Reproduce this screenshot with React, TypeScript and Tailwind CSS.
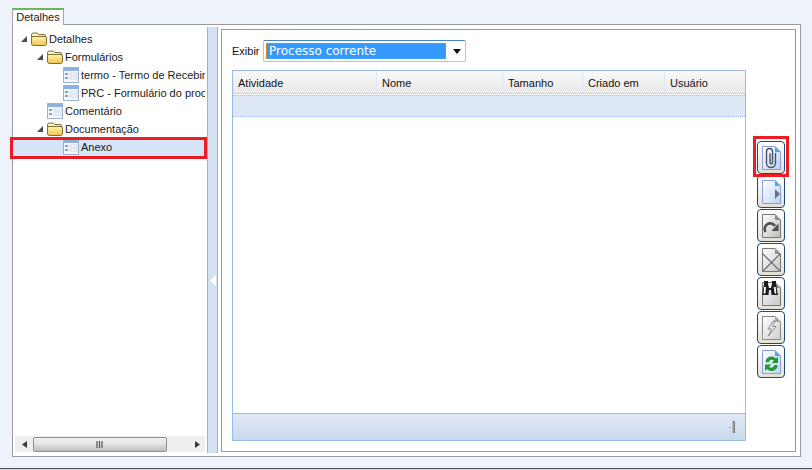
import React from "react";

const Folder = () => (
  <svg width="16" height="14" viewBox="0 0 16 14" className="shrink-0">
    <defs>
      <linearGradient id="fg" x1="0" y1="0" x2="0" y2="1">
        <stop offset="0" stopColor="#fff3b0" />
        <stop offset="1" stopColor="#f2c24a" />
      </linearGradient>
    </defs>
    <path d="M.5 5 V3 Q.5 1 2.5 1 H6 L7.5 2.5 H13 Q14.5 2.5 14.5 4 V6" fill="#fdf2bf" stroke="#7d6f35" />
    <path d="M.5 11.5 V6 Q.5 4.5 2 4.5 H14 Q15.5 4.5 15.5 6 V11.5 Q15.5 13.5 13.5 13.5 H2.5 Q.5 13.5 .5 11.5Z" fill="url(#fg)" stroke="#7d6f35" />
  </svg>
);

const FormIcon = () => (
  <svg width="16" height="16" viewBox="0 0 16 16" className="shrink-0">
    <rect x=".5" y=".5" width="15" height="15" fill="#f3f6fa" stroke="#9db2cc" />
    <rect x="1" y="1" width="14" height="3" fill="#8fb0dc" />
    <rect x="2" y="6" width="3" height="2" fill="#7ea4dc" />
    <rect x="2" y="10" width="3" height="2" fill="#7ea4dc" />
    <rect x="7" y="6" width="7" height="2" fill="#fff" stroke="#bcc6d2" strokeWidth=".6" />
    <rect x="7" y="10" width="7" height="2" fill="#fff" stroke="#bcc6d2" strokeWidth=".6" />
  </svg>
);

const Expander = () => (
  <svg width="6" height="6" viewBox="0 0 6 6" className="shrink-0">
    <path d="M6 0 V6 H0Z" fill="#4a4a4a" />
  </svg>
);

type RowProps = { level: number; label: string; kind: "folder" | "form"; open?: boolean; selected?: boolean };

const TreeRow = ({ level, label, kind, open, selected }: RowProps) => {
  const pads = ["pl-[8px]", "pl-[24px]", "pl-[40px]"];
  return (
    <div className={`flex h-[18px] items-center ${pads[level]} ${selected ? "bg-[#d5e4f7]" : ""}`}>
      <div className="flex w-[10px] shrink-0 justify-start">{open ? <Expander /> : null}</div>
      <div className="flex w-[18px] shrink-0 justify-start">
        {kind === "folder" ? <Folder /> : <FormIcon />}
      </div>
      <span className="whitespace-nowrap text-[11px] leading-[16px] text-[#1a1a1a]">{label}</span>
    </div>
  );
};

const HeaderCell = ({ label, w, last }: { label: string; w: string; last?: boolean }) => (
  <div className={`flex h-full items-center pl-[5px] pt-[2px] text-[11px] text-[#111] ${w} ${last ? "" : "border-r border-[#dde7f5]"}`}>
    {label}
  </div>
);

const Page = ({ fill, stroke, fold, children }: { fill: string; stroke: string; fold: string; children?: React.ReactNode }) => (
  <svg width="19" height="25" viewBox="0 0 19 25">
    <defs>
      <linearGradient id={`p${fill.slice(1)}`} x1="0" y1="0" x2="1" y2="1">
        <stop offset="0" stopColor="#ffffff" />
        <stop offset="1" stopColor={fill} />
      </linearGradient>
    </defs>
    <path d="M.5 1.5 H13 L18.5 7 V24.5 H.5Z" fill={`url(#p${fill.slice(1)})`} stroke={stroke} />
    <path d="M13 1.5 V7 H18.5Z" fill={fold} />
    {children}
  </svg>
);

const Btn = ({ children }: { children: React.ReactNode }) => (
  <div className="flex h-[33px] w-[28px] items-center justify-center rounded-[4px] border border-[#1f4a75] bg-gradient-to-b from-[#ffffff] to-[#e3e1d6]">
    {children}
  </div>
);

const Blue = "#bcd4f6";

export default function App() {
  return (
    <div className="relative flex h-[470px] w-[812px] flex-col overflow-hidden bg-[#edf2fb] font-['Liberation_Sans',sans-serif]">
      <div className="flex-1 pl-[12px] pt-[8px]">
        <div className="relative z-10 -mb-px flex h-[17px] w-[52px] items-center justify-center border-x border-t-2 border-x-[#a3a7a8] border-t-[#6fb35f] border-b-white bg-white text-[11px] text-[#222]">
          Detalhes
        </div>
        <div className="flex h-[433px] w-[789px] border border-[#979b9c] bg-white">
          {/* tree */}
          <div className="flex h-full w-[194px] shrink-0 flex-col">
            <div className="mr-[2px] flex-1 overflow-hidden pt-[5px]">
              <TreeRow level={0} label="Detalhes" kind="folder" open />
              <TreeRow level={1} label="Formulários" kind="folder" open />
              <TreeRow level={2} label="termo - Termo de Recebimento" kind="form" />
              <TreeRow level={2} label="PRC - Formulário do processo" kind="form" />
              <TreeRow level={1} label="Comentário" kind="form" />
              <TreeRow level={1} label="Documentação" kind="folder" open />
              <TreeRow level={2} label="Anexo" kind="form" selected />
            </div>
            <div className="mx-[2px] mb-[4px] flex h-[16px] items-center bg-[#efefef]">
              <div className="flex w-[18px] justify-center">
                <svg width="5" height="7" viewBox="0 0 5 7"><path d="M5 0 V7 L0 3.5Z" fill="#3a3a3a" /></svg>
              </div>
              <div className="flex h-[15px] w-[134px] items-center justify-center rounded-[2px] border border-[#8f8f8f] bg-gradient-to-b from-[#f2f2f2] via-[#e2e2e2] to-[#bcbcbc]">
                <svg width="8" height="7" viewBox="0 0 8 7"><path d="M1 0 V7 M3.5 0 V7 M6 0 V7" stroke="#555" strokeWidth="1.2" /></svg>
              </div>
              <div className="flex flex-1 justify-end pr-[5px]">
                <svg width="5" height="7" viewBox="0 0 5 7"><path d="M0 0 V7 L5 3.5Z" fill="#3a3a3a" /></svg>
              </div>
            </div>
          </div>

          {/* splitter */}
          <div className="mt-[2px] flex h-[426px] w-[11px] shrink-0 items-center justify-center border-x border-[#8fb4e3] bg-[#d3e1f1] pt-[80px]">
            <svg width="6" height="11" viewBox="0 0 6 11"><path d="M6 0 V11 L0 5.5Z" fill="#fff" /></svg>
          </div>

          {/* right panel */}
          <div className="ml-[3px] mt-[4px] flex h-[423px] w-[575px] shrink-0 border border-[#979b9c] p-[10px]">
            <div className="flex h-full w-[514px] shrink-0 flex-col">
              <div className="flex h-[22px] items-center">
                <span className="w-[31px] text-[11px] text-[#111]">Exibir</span>
                <div className="flex h-[22px] w-[203px] items-center rounded-[2px] border border-[#a9c6e3] border-t-[#4a86b8] bg-white pl-[2px]">
                  <div className="flex h-[16px] w-[180px] items-center border border-dotted border-[#e08a20] bg-[#3399ff] pl-[2px] font-['DejaVu_Sans',sans-serif] text-[12px] text-white">
                    Processo corrente
                  </div>
                  <div className="flex flex-1 justify-center pl-[2px]">
                    <svg width="8" height="5" viewBox="0 0 8 5"><path d="M0 0 H8 L4 5Z" fill="#111" /></svg>
                  </div>
                </div>
              </div>

              <div className="mt-[8px] flex flex-1 flex-col border border-[#99bbe8]">
                <div className="flex h-[23px] shrink-0 border-b border-[#d0d0d0] bg-gradient-to-b from-[#f9f9f9] to-[#e9e9e9]">
                  <HeaderCell label="Atividade" w="w-[144px]" />
                  <HeaderCell label="Nome" w="w-[126px]" />
                  <HeaderCell label="Tamanho" w="w-[80px]" />
                  <HeaderCell label="Criado em" w="w-[82px]" />
                  <HeaderCell label="Usuário" w="flex-1" last />
                </div>
                <div className="mt-px h-[22px] shrink-0 border-y border-dotted border-[#a3bae9] bg-[#dfe8f6]" />
                <div className="flex-1 bg-white" />
                <div className="flex h-[27px] shrink-0 items-center justify-end border-t border-[#99bbe8] bg-gradient-to-b from-[#dfe8f6] to-[#c9daed] pr-[10px]">
                  <div className="mr-[1px] h-px w-px bg-[#666]" />
                  <div className="ml-[1px] h-[12px] w-[3px] bg-gradient-to-r from-[#c8c8c8] to-[#6f6f6f]" />
                </div>
              </div>
            </div>

            <div className="ml-[11px] flex flex-col gap-px pt-[101px]">
              <Btn>
                <Page fill={Blue} stroke="#8a9ede" fold="#5c9ee8">
                  <path d="M13.5 8 V18 A4.5 4.5 0 0 1 4.5 18 V6.5 A3 3 0 0 1 10.5 6.5 V17.5 A1.2 1.2 0 0 1 8 17.5 V8.5" fill="none" stroke="#4a5260" strokeWidth="1.4" />
                </Page>
              </Btn>
              <Btn>
                <Page fill={Blue} stroke="#8a9ede" fold="#5c9ee8">
                  <path d="M18 15 L13 10 V20Z" fill="#667480" />
                </Page>
              </Btn>
              <Btn>
                <Page fill="#bdbdbd" stroke="#777" fold="#8f8f8f">
                  <path d="M3.5 19 A5.5 5.5 0 0 1 13 13" fill="none" stroke="#4f4f4f" strokeWidth="2.6" />
                  <path d="M16.5 10.5 V18 H9.5Z" fill="#4f4f4f" />
                </Page>
              </Btn>
              <Btn>
                <Page fill="#c6c6c6" stroke="#777" fold="#8f8f8f">
                  <path d="M1 7 L18 24 M18 7 L1 24" stroke="#666" strokeWidth="1.1" />
                </Page>
              </Btn>
              <Btn>
                <Page fill="#c6c6c6" stroke="#777" fold="#8f8f8f">
                  <path d="M2 0 H6 V3 L7 7 H9 L10 3 V0 H14 V3 L16 14 H9.5 L9 9 H7 L6.5 14 H0 L2 3Z" fill="#1c1c1c" />
                  <path d="M2.2 6 H4 L3.4 12.5 H1.6Z M11.8 6 H13.6 L14.4 12.5 H12.6Z" fill="#fff" />
                </Page>
              </Btn>
              <Btn>
                <Page fill="#cecece" stroke="#888" fold="#a0a0a0">
                  <path d="M11 6 L6 14 H9.5 L6.5 21 L14 11.5 H10.5 L13 6Z" fill="#e8e8e8" stroke="#777" strokeWidth=".8" />
                </Page>
              </Btn>
              <Btn>
                <Page fill={Blue} stroke="#8a9ede" fold="#5c9ee8">
                  <path d="M3.5 13 A6 6 0 0 1 14 9.5 L16 7.5 V14 H9.5 L12 11.5 A3.5 3.5 0 0 0 6.5 13.5Z" fill="#1f9a2f" />
                  <path d="M15.5 16 A6 6 0 0 1 5 20 L3 22 V15.5 H9.5 L7 18 A3.5 3.5 0 0 0 12.5 16Z" fill="#1f9a2f" />
                </Page>
              </Btn>
            </div>
          </div>
        </div>
      </div>
      <div className="h-px shrink-0 bg-[#4a4a4a]" />
      <div className="h-px shrink-0 bg-[#d8dce4]" />

      <div className="absolute left-[10px] top-[137px] h-[22px] w-[197px] border-[3px] border-[#ed1c24]" />
      <div className="absolute left-[753px] top-[136px] h-[41px] w-[36px] border-[3px] border-[#ed1c24]" />
    </div>
  );
}
